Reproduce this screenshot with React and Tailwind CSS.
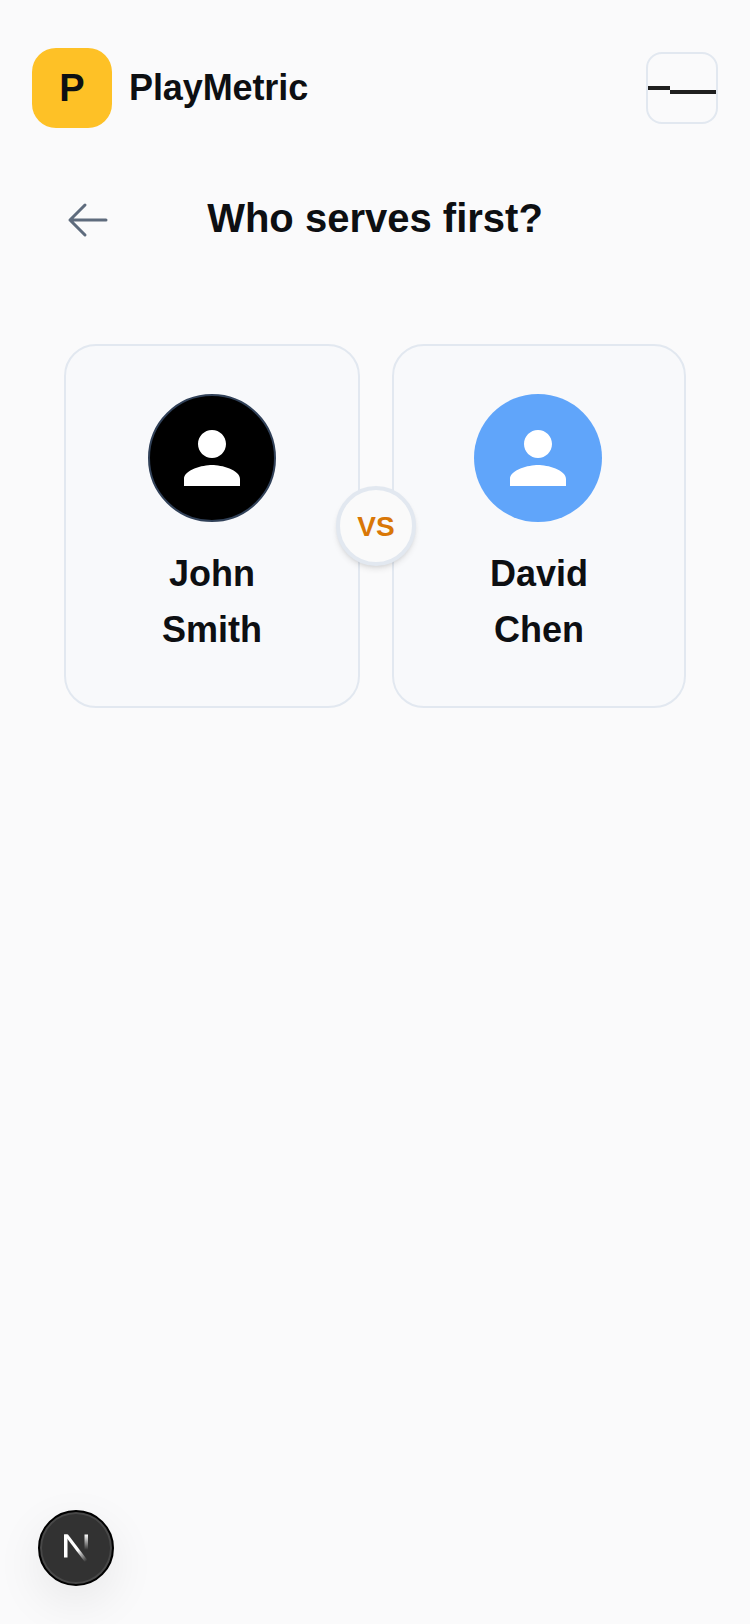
import React from 'react';

const players = [
  { first: 'John', last: 'Smith', avatar: 'bg-black border-2 border-slate-700' },
  { first: 'David', last: 'Chen', avatar: 'mr-[2px] bg-[#60a5fa]' },
];

const PersonIcon = () => (
  <svg width="84" height="84" viewBox="0 0 24 24" fill="#fff">
    <path d="M12 12c2.21 0 4-1.79 4-4s-1.79-4-4-4-4 1.79-4 4 1.79 4 4 4zm0 2c-2.67 0-8 1.34-8 4v2h16v-2c0-2.66-5.33-4-8-4z" />
  </svg>
);

// 카드 하나
const PlayerCard = ({ player }) => (
  <div className="flex flex-col items-center rounded-[32px] border-2 border-slate-200 bg-[#f8f9fb] p-12">
    <div className={`flex h-32 w-32 items-center justify-center rounded-full ${player.avatar}`}>
      <PersonIcon />
    </div>
    <p className="mt-6 text-center text-[36px] leading-[56px] font-bold text-[#0d0f12]">
      {player.first}
      <br />
      {player.last}
    </p>
  </div>
);

const NextBadge = () => (
  <div className="fixed bottom-[38px] left-[38px] flex h-[76px] w-[76px] items-center justify-center rounded-full border-2 border-black bg-[#323232] shadow-[0_16px_48px_rgba(0,0,0,0.08)] ring-2 ring-inset ring-[#484848]">
    <svg width="26" height="28" viewBox="0 0 26 28">
      <defs>
        <linearGradient id="nDiag" x1="0.1" y1="0.1" x2="0.95" y2="0.95">
          <stop offset="0.55" stopColor="#fff" />
          <stop offset="1" stopColor="#fff" stopOpacity="0" />
        </linearGradient>
        <linearGradient id="nBar" x1="0" y1="0" x2="0" y2="1">
          <stop offset="0" stopColor="#fff" />
          <stop offset="0.85" stopColor="#fff" stopOpacity="0" />
        </linearGradient>
      </defs>
      <rect x="1" y="0.5" width="3.5" height="23" fill="#fff" />
      <path d="M1 0.5H5L25.5 27.5H21.5Z" fill="url(#nDiag)" />
      <rect x="21.5" y="0.5" width="3.5" height="18" fill="url(#nBar)" />
    </svg>
  </div>
);

const App = () => {
  return (
    <div className="min-h-screen bg-[#fafafb] font-['Liberation_Sans',Arial,sans-serif]">
      <header className="flex items-center justify-between px-8 pt-12">
        <div className="flex items-center gap-[17px]">
          <div className="flex h-20 w-20 items-center justify-center rounded-3xl bg-[#fec126] text-[38px] font-bold text-[#0d0f12]">
            P
          </div>
          <span className="text-[36px] tracking-[-0.1px] font-bold text-[#0d0f12]">PlayMetric</span>
        </div>
        <button className="flex h-[72px] w-[72px] items-center justify-center rounded-2xl border-2 border-slate-200" aria-label="Menu">
          <div className="mt-1 flex h-2 w-full">
            <span className="h-1 w-[22px] self-start bg-[#1f1f1f]" />
            <span className="h-1 w-[46px] self-end bg-[#1f1f1f]" />
          </div>
        </button>
      </header>

      <div className="mt-[68px] mb-[100px] flex h-12 items-center justify-between px-16">
        <svg width="48" height="48" viewBox="0 0 24 24" fill="none" stroke="#5e6b7d" strokeWidth="1.5" strokeLinecap="round" strokeLinejoin="round">
          <path d="M10.5 19.5 3 12m0 0 7.5-7.5M3 12h18" />
        </svg>
        <h1 className="mb-1 text-[40px] leading-[48px] font-bold text-[#0d0f12]">Who serves first?</h1>
        <div className="w-12" />
      </div>

      <div className="relative mx-16 grid grid-cols-[296px_294px] gap-8">
        {players.map((player) => (
          <PlayerCard key={player.first} player={player} />
        ))}
        <div className="absolute top-1/2 left-[calc(50%+1px)] flex h-20 w-20 -translate-x-1/2 -translate-y-1/2 items-center justify-center rounded-full border-4 border-slate-200 bg-[#fafafa] pt-px text-[28px] font-bold text-[#d97706] shadow-md">
          VS
        </div>
      </div>

      <NextBadge />
    </div>
  );
};

export default App;
